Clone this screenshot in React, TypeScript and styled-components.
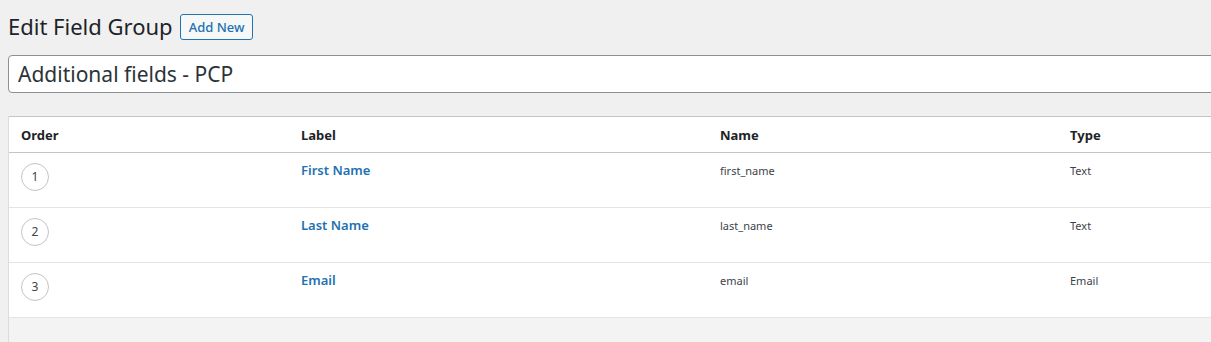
import React from 'react';
import styled, { createGlobalStyle } from 'styled-components';

const GlobalStyle = createGlobalStyle`
  html, body {
    margin: 0;
    padding: 0;
    background: #f0f0f1;
    overflow: hidden;
  }
  body {
    font-family: "Noto Sans", "Liberation Sans", sans-serif;
    color: #1d2327;
    font-size: 13px;
  }
`;

const Page = styled.div`
  width: 1240px;
  padding: 0 0 0 8px;
`;

const TitleBar = styled.div`
  display: flex;
  align-items: center;
  gap: 7px;
  padding: 12px 0 14px;
`;

const Heading = styled.h1`
  margin: 0;
  font-size: 22px;
  font-weight: 400;
  line-height: 29px;
  color: #1d2327;
`;

const AddNewButton = styled.button`
  font-family: inherit;
  font-size: 13px;
  font-weight: 500;
  line-height: 18px;
  color: #2271b1;
  background: #f6f7f7;
  border: 1px solid #2271b1;
  border-radius: 3px;
  padding: 3px 8px;
  margin-top: 1px;
  cursor: pointer;
`;

const TitleInput = styled.input`
  display: block;
  box-sizing: border-box;
  width: 100%;
  height: 38px;
  padding: 3px 9px;
  font-family: inherit;
  font-size: 21px;
  color: #2c3338;
  background: #fff;
  border: 1px solid #8c8f94;
  border-radius: 4px;
  outline: none;
`;

const Panel = styled.div`
  margin-top: 23px;
  border-left: 1px solid #dcdcde;
`;

const Table = styled.div`
  background: #fff;
  border-top: 1px solid #c3c4c7;
`;

const Row = styled.div<{ $head?: boolean }>`
  display: grid;
  grid-template-columns: 280px 419px 350px 1fr;
  height: ${p => (p.$head ? '35px' : '54px')};
  align-items: ${p => (p.$head ? 'center' : 'start')};
  border-bottom: 1px solid ${p => (p.$head ? '#c3c4c7' : '#e2e4e7')};
`;

const HeadCell = styled.div`
  padding-left: 12px;
  font-size: 13px;
  font-weight: 700;
  color: #1d2327;
`;

const Cell = styled.div<{ $top?: number }>`
  padding: ${p => p.$top ?? 9}px 0 0 12px;
  font-size: 11px;
  color: #3c434a;
  line-height: 18px;
`;

const OrderBadge = styled.span`
  display: inline-flex;
  align-items: center;
  justify-content: center;
  width: 26px;
  height: 26px;
  border: 1px solid #c3c4c7;
  border-radius: 50%;
  font-size: 12px;
  color: #3c434a;
`;

const FieldLink = styled.a`
  font-size: 13px;
  font-weight: 600;
  color: #2271b1;
  text-decoration: none;
`;

const Footer = styled.div`
  height: 40px;
  background: #f3f3f3;
`;

const fields = [
  { label: 'First Name', name: 'first_name', type: 'Text' },
  { label: 'Last Name', name: 'last_name', type: 'Text' },
  { label: 'Email', name: 'email', type: 'Email' },
];

const App: React.FC = () => {
  return (
    <Page>
      <GlobalStyle />
      <TitleBar>
        <Heading>Edit Field Group</Heading>
        <AddNewButton type="button">Add New</AddNewButton>
      </TitleBar>
      <TitleInput defaultValue="Additional fields - PCP" />
      <Panel>
        <Table>
          <Row $head>
            <HeadCell>Order</HeadCell>
            <HeadCell>Label</HeadCell>
            <HeadCell>Name</HeadCell>
            <HeadCell>Type</HeadCell>
          </Row>
          {fields.map((f, i) => (
            <Row key={f.name}>
              <Cell $top={10}>
                <OrderBadge>{i + 1}</OrderBadge>
              </Cell>
              <Cell $top={8}>
                <FieldLink href="#">{f.label}</FieldLink>
              </Cell>
              <Cell>{f.name}</Cell>
              <Cell>{f.type}</Cell>
            </Row>
          ))}
        </Table>
        <Footer />
      </Panel>
    </Page>
  );
};

export default App;
